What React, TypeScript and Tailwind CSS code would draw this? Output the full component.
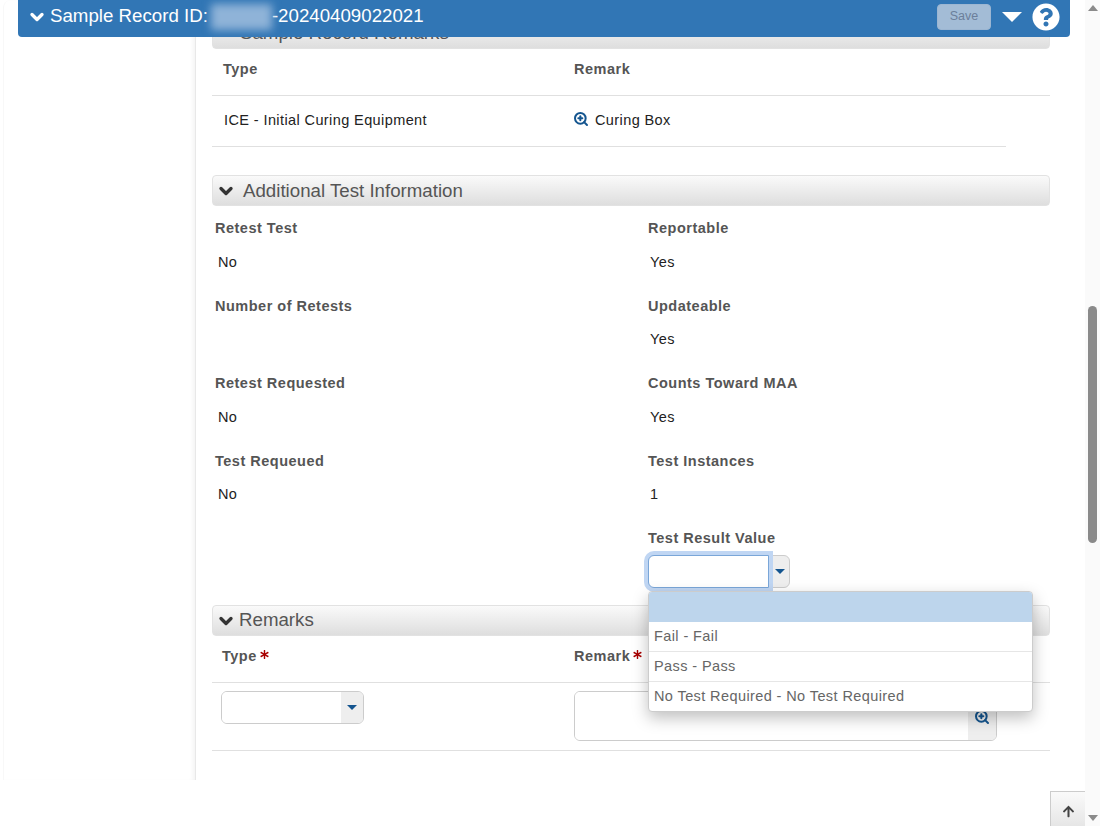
import { ChevronDown, ZoomIn } from 'lucide-react'
import { FaArrowUp, FaAsterisk, FaQuestionCircle } from 'react-icons/fa'

const fields = [
  { left: 'Retest Test', leftValue: 'No', right: 'Reportable', rightValue: 'Yes' },
  { left: 'Number of Retests', leftValue: '', right: 'Updateable', rightValue: 'Yes' },
  { left: 'Retest Requested', leftValue: 'No', right: 'Counts Toward MAA', rightValue: 'Yes' },
  { left: 'Test Requeued', leftValue: 'No', right: 'Test Instances', rightValue: '1' },
]

function SectionBar({ title, titleClass, iconClass }: { title: string; titleClass: string; iconClass?: string }) {
  return (
    <div className="flex h-[31px] items-center rounded border border-[#e2e2e2] bg-gradient-to-b from-[#fafafa] to-[#dedede] pl-[3px] tracking-normal text-[#555]">
      <ChevronDown className={`h-[20px] w-[20px] text-[#333] ${iconClass ?? ''}`} strokeWidth={4} />
      <span className={`text-[18.7px] ${titleClass}`}>{title}</span>
    </div>
  )
}

function Caret() {
  return <span className="h-0 w-0 border-x-[5px] border-t-[5px] border-x-transparent border-t-[#14558f]" />
}

function Required() {
  return <FaAsterisk className="ml-[3px] mt-[-5px] h-[9px] w-[9px] text-[#a80000]" />
}

export default function App() {
  return (
    <div className="relative flex h-[826px] w-[1100px] overflow-hidden bg-white font-['Liberation_Sans',Arial,sans-serif] text-[14.5px] tracking-[0.4px] text-[#222]">
      {/* Sticky record header */}
      <div className="absolute left-[18px] top-0 z-20 flex h-[37px] w-[1052px] items-center rounded-b bg-[#3176b5] pb-[3px] pl-[9px] pr-[10px] tracking-normal text-white">
        <ChevronDown className="h-[20px] w-[20px]" strokeWidth={4} />
        <span className="ml-[3px] pb-[1px] text-[18.7px]">Sample Record ID:</span>
        <span className="ml-[3px] h-[26px] w-[61px] bg-[#8fb3d8] blur-[4px]" />
        <span className="pb-[1px] text-[18.7px]">-20240409022021</span>
        <button className="ml-auto h-[26px] w-[54px] rounded border border-[#9cb6d2] bg-[#a3bcd6] pb-[1px] text-[12.5px] text-[#6b7f9b]">
          Save
        </button>
        <span className="ml-[11px] h-0 w-0 border-x-[10px] border-t-[10px] border-x-transparent border-t-white" />
        <FaQuestionCircle className="ml-[10px] h-[28px] w-[28px]" />
      </div>

      {/* Left nav column, empty in this shot */}
      <div className="ml-[3px] h-[780px] w-[193px] shrink-0 rounded-tl-lg border-l border-r border-l-[#f8f8f8] border-r-[#e8e8e8] shadow-[inset_-4px_0_4px_-2px_rgba(0,0,0,0.05)]" />

      <main className="ml-[16px] w-[838px] shrink-0 pt-[18px]">
        <SectionBar title="Sample Record Remarks" titleClass="ml-[4px]" iconClass="mt-[-8px]" />

        <div className="flex h-[47px] items-center border-b border-[#e0e0e0] pb-[5px] font-bold tracking-[0.5px] text-[#555]">
          <span className="w-[362px] pl-[11px]">Type</span>
          <span>Remark</span>
        </div>
        <div className="flex h-[51px] w-[794px] items-center border-b border-[#e0e0e0] text-[#222]">
          <span className="w-[362px] pl-[12px]">ICE - Initial Curing Equipment</span>
          <ZoomIn className="ml-[-1px] mt-[-5px] h-[16px] w-[16px] text-[#14558f]" strokeWidth={3} />
          <span className="ml-[6px]">Curing Box</span>
        </div>

        <div className="mt-[28px]">
          <SectionBar title="Additional Test Information" titleClass="ml-[7px] mt-[1px]" />
        </div>

        <div className="mt-[10px] grid grid-cols-[436px_1fr]">
          {fields.map((f) => (
            <div key={f.left} className="col-span-2 grid h-[77.5px] grid-cols-subgrid content-start">
              <div className="pl-[3px]">
                <div className="h-[33.5px] font-bold leading-[24px] tracking-[0.5px] text-[#555]">{f.left}</div>
                <div className="pl-[3px] leading-[24px]">{f.leftValue}</div>
              </div>
              <div>
                <div className="h-[33.5px] font-bold leading-[24px] tracking-[0.5px] text-[#555]">{f.right}</div>
                <div className="pl-[2px] leading-[24px]">{f.rightValue}</div>
              </div>
            </div>
          ))}
        </div>

        <div className="relative ml-[436px] h-[64px] pt-[2px]">
          <div className="font-bold leading-[20px] tracking-[0.5px] text-[#555]">Test Result Value</div>
          <div className="mt-[7px] flex h-[33px] w-[142px]">
            <div className="z-10 h-[33px] w-[121px] rounded-l-md border border-[#7aa6d8] bg-white shadow-[0_0_0_4px_#c0d6f3]" />
            <div className="flex w-[21px] items-center justify-center rounded-r-md border border-[#ccc] bg-[#eee]">
              <Caret />
            </div>
          </div>
        </div>

        <div className="mt-[15px]">
          <SectionBar title="Remarks" titleClass="ml-[3px]" />
        </div>

        <div className="flex h-[47px] items-center border-b border-[#e0e0e0] pb-[5px] font-bold tracking-[0.5px] text-[#555]">
          <span className="flex w-[362px] items-center pl-[10px]">
            Type
            <Required />
          </span>
          <span className="flex items-center">
            Remark
            <Required />
          </span>
        </div>
        <div className="flex h-[68px] border-b border-[#e0e0e0] pt-[8px]">
          <div className="ml-[9px] flex h-[33px] w-[143px] overflow-hidden rounded-md border border-[#ccc]">
            <div className="flex-1 bg-white" />
            <div className="flex w-[22px] items-center justify-center bg-[#eee]">
              <Caret />
            </div>
          </div>
          <div className="ml-[210px] flex h-[50px] w-[423px] overflow-hidden rounded-md border border-[#ccc]">
            <div className="flex-1 bg-white" />
            <div className="flex w-[28px] items-start justify-center bg-[#eee] pt-[17px]">
              <ZoomIn className="h-[16px] w-[16px] text-[#14558f]" strokeWidth={3} />
            </div>
          </div>
        </div>
      </main>

      {/* Open combobox list */}
      <div className="absolute left-[648px] top-[591px] z-10 w-[385px] overflow-hidden rounded border border-[#ccc] bg-white text-[#666] shadow-[0_6px_16px_rgba(0,0,0,0.25)]">
        <div className="h-[30px] bg-[#bdd5ec]" />
        <div className="flex h-[30px] items-center border-b border-[#e6e6e6] pl-[5px]">Fail - Fail</div>
        <div className="flex h-[30px] items-center border-b border-[#e6e6e6] pl-[5px]">Pass - Pass</div>
        <div className="flex h-[29px] items-center pl-[5px]">No Test Required - No Test Required</div>
      </div>

      {/* Back to top */}
      <div className="absolute bottom-0 left-[1050px] flex h-[35px] w-[35px] items-center justify-center border border-b-0 border-r-0 border-[#ccc] bg-gradient-to-b from-[#fafafa] to-[#e6e6e6] pt-[5px] text-[#444]">
        <FaArrowUp className="h-[13px] w-[13px]" />
      </div>

      {/* Scrollbar */}
      <div className="absolute right-0 top-0 flex h-full w-[15px] flex-col items-center bg-[#fafafa] py-[5px]">
        <span className="h-0 w-0 border-x-[5px] border-b-[6px] border-x-transparent border-b-[#8a8a8a]" />
        <div className="mt-[295px] h-[237px] w-[9px] rounded-full bg-[#8a8a8a]" />
        <span className="mt-auto h-0 w-0 border-x-[5px] border-t-[6px] border-x-transparent border-t-[#8a8a8a]" />
      </div>
    </div>
  )
}
